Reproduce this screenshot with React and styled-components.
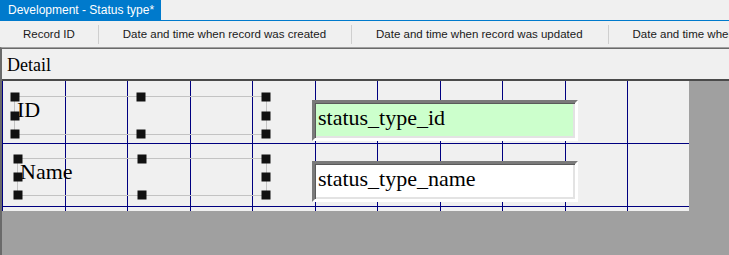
import React from 'react';
import styled, { createGlobalStyle } from 'styled-components';

const columns = [
  'Record ID',
  'Date and time when record was created',
  'Date and time when record was updated',
  'Date and time when record was deleted',
];

const fields = [
  { label: 'ID', field: 'status_type_id', key: true, labelTop: 15, labelLeft: 12, labelWidth: 253, labelHeight: 39, boxTop: 19 },
  { label: 'Name', field: 'status_type_name', key: false, labelTop: 14, labelLeft: 15, labelWidth: 250, labelHeight: 38, boxTop: 17 },
];

const GlobalStyle = createGlobalStyle`
  html, body {
    margin: 0;
    padding: 0;
    background: #f0f0f0;
    overflow: hidden;
  }
  * {
    box-sizing: border-box;
  }
`;

const Window = styled.div`
  width: 729px;
  height: 255px;
  display: flex;
  flex-direction: column;
  background: #f0f0f0;
  overflow: hidden;
  font-family: 'Segoe UI', 'Liberation Sans', Arial, sans-serif;
`;

const TabStrip = styled.div`
  display: flex;
  height: 21px;
  border-bottom: 1px solid #007acc;
`;

const Tab = styled.div`
  height: 20px;
  padding: 0 7px 0 8px;
  background: #007acc;
  color: #ffffff;
  font-size: 12px;
  line-height: 20px;
  white-space: nowrap;
`;

const ColumnHeader = styled.div`
  display: flex;
  align-items: center;
  height: 26px;
  white-space: nowrap;
  overflow: hidden;
`;

const Column = styled.div`
  flex: none;
  padding: 0 ${(p) => (p.$first ? 23 : 25)}px 0 ${(p) => (p.$first ? 23 : 24)}px;
  font-size: 11.5px;
  color: #1a1a1a;
  border-left: ${(p) => (p.$first ? 'none' : '1px solid #cfcfcf')};
  line-height: 19px;
`;

const Designer = styled.div`
  flex: 1;
  display: flex;
  flex-direction: column;
  background: #a0a0a0;
  border-left: 2px solid #6a6a6a;
  border-top: 1px solid #a0a0a0;
`;

const BandHeader = styled.div`
  height: 33px;
  padding: 2px 0 0 5px;
  background: #f0f0f0;
  border-top: 1px solid #6a6a6a;
  border-bottom: 2px solid #4a4a4a;
  font-family: 'Liberation Serif', 'Times New Roman', serif;
  font-size: 18px;
  line-height: 28px;
  color: #000;
`;

const DetailGrid = styled.div`
  width: 687px;
  height: 130px;
  background-color: #f0f0f0;
  background-image: linear-gradient(
    to right,
    transparent 62px,
    #000080 62px,
    #000080 63px,
    transparent 63px,
    transparent 124px,
    #000080 124px,
    #000080 125px
  );
  background-size: 125px 100%;
  background-position: 1px 0;
  display: flex;
  flex-direction: column;
`;

const Row = styled.div`
  position: relative;
  flex: none;
  height: 63px;
  border-bottom: 1px solid #000080;
  display: flex;
  align-items: flex-start;
`;

const LabelFrame = styled.div`
  position: relative;
  flex: none;
  margin-top: ${(p) => p.$top}px;
  margin-left: ${(p) => p.$left}px;
  width: ${(p) => p.$width}px;
  height: ${(p) => p.$height}px;
  border: 1px solid #c3c3c3;
  padding: 1px 0 0 2px;
  font-family: 'Liberation Serif', 'Times New Roman', serif;
  font-size: 22px;
  line-height: 24px;
  color: #000;
`;

const Handle = styled.span`
  position: absolute;
  width: 9px;
  height: 9px;
  background: #111111;
  left: ${(p) => p.$x};
  top: ${(p) => p.$y};
  transform: translate(-50%, -50%);
`;

const FieldBox = styled.div`
  flex: none;
  margin-top: ${(p) => p.$top}px;
  margin-left: 45px;
  width: 266px;
  height: 41px;
  border: 3px solid;
  border-color: #7a7a7a #ffffff #ffffff #7a7a7a;
  box-shadow: inset 1px 1px 0 #5a5a5a, inset -2px -2px 0 #e3e3e3;
  background: ${(p) => (p.$key ? '#ccffcc' : '#ffffff')};
  padding: 3px 0 0 3px;
  font-family: 'Liberation Serif', 'Times New Roman', serif;
  font-size: 22px;
  line-height: 24px;
  color: #000;
  white-space: nowrap;
`;

const handlePoints = [
  ['0%', '0%'],
  ['0%', '50%'],
  ['0%', '100%'],
  ['50%', '0%'],
  ['50%', '100%'],
  ['100%', '0%'],
  ['100%', '50%'],
  ['100%', '100%'],
];

const App = () => (
  <>
    <GlobalStyle />
    <Window>
      <TabStrip>
        <Tab>Development - Status type*</Tab>
      </TabStrip>
      <ColumnHeader>
        {columns.map((c, i) => (
          <Column key={c} $first={i === 0}>
            {c}
          </Column>
        ))}
      </ColumnHeader>
      <Designer>
        <BandHeader>Detail</BandHeader>
        <DetailGrid>
          {fields.map((f) => (
            <Row key={f.field}>
              <LabelFrame
                $top={f.labelTop}
                $left={f.labelLeft}
                $width={f.labelWidth}
                $height={f.labelHeight}
              >
                {f.label}
                {handlePoints.map(([x, y]) => (
                  <Handle key={x + y} $x={x} $y={y} />
                ))}
              </LabelFrame>
              <FieldBox $top={f.boxTop} $key={f.key}>
                {f.field}
              </FieldBox>
            </Row>
          ))}
        </DetailGrid>
      </Designer>
    </Window>
  </>
);

export default App;
